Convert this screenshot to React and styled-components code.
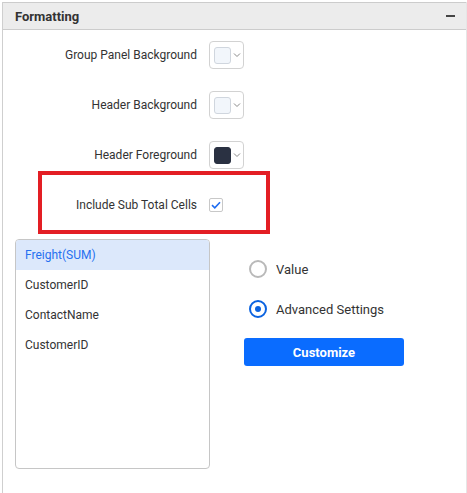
import React, { useState } from 'react'
import styled, { createGlobalStyle } from 'styled-components'

const GlobalStyle = createGlobalStyle`
  body {
    margin: 0;
    background: #fff;
    font-family: Roboto, "Liberation Sans", Arial, sans-serif;
    color: #333;
  }
`

const Panel = styled.div`
  box-sizing: border-box;
  margin: 2px 0 0 2px;
  width: 465px;
  height: 491px;
  border-left: 1px solid #cfcfcf;
  border-right: 1px solid #e6e6e6;
`

const Header = styled.div`
  display: flex;
  align-items: center;
  justify-content: space-between;
  height: 26px;
  padding: 0 11px 0 12px;
  background: #ececec;
  border-top: 1px solid #cccccc;
  border-bottom: 1px solid #cccccc;
  font-size: 13px;
  font-weight: 700;
  color: #333;
`

const Collapse = styled.span`
  display: block;
  width: 9px;
  height: 2px;
  background: #444;
`

const Form = styled.div`
  display: flex;
  flex-direction: column;
`

const Row = styled.div`
  position: relative;
  display: grid;
  grid-template-columns: 194px auto;
  column-gap: 12px;
  align-items: center;
  height: 50px;
`

const Label = styled.span`
  text-align: right;
  font-size: 12px;
  color: #333;
`

const Highlight = styled.div`
  position: absolute;
  left: 35px;
  top: -9px;
  width: 224px;
  height: 55px;
  border: 4px solid #e31e24;
`

const Picker = styled.div`
  box-sizing: border-box;
  display: flex;
  align-items: center;
  gap: 2px;
  width: 35px;
  height: 28px;
  padding-left: 4px;
  border: 1px solid #d2d2d2;
  border-radius: 4px;
  background: #fff;
`

const Swatch = styled.span`
  box-sizing: border-box;
  width: 17px;
  height: 17px;
  border-radius: 3px;
  border: 1px solid ${p => (p.dark ? '#2a3142' : '#d0d6de')};
  background: ${p => p.color};
`

const Check = styled.span`
  box-sizing: border-box;
  display: flex;
  align-items: center;
  justify-content: center;
  width: 14px;
  height: 14px;
  border: 1px solid #c8c8c8;
  border-radius: 2px;
  background: #fff;
`

const Lower = styled.div`
  display: flex;
  gap: 39px;
  padding: 9px 0 0 12px;
`

const List = styled.div`
  box-sizing: border-box;
  width: 195px;
  height: 230px;
  border: 1px solid #c6c6c6;
  border-radius: 4px;
  overflow: hidden;
`

const Item = styled.div`
  height: 30px;
  line-height: 31px;
  padding-left: 9px;
  font-size: 12px;
  color: ${p => (p.selected ? '#2570f0' : '#333')};
  background: ${p => (p.selected ? '#dce8fb' : 'transparent')};
  cursor: pointer;
`

const Options = styled.div`
  display: flex;
  flex-direction: column;
  padding-top: 20px;
`

const RadioRow = styled.label`
  display: flex;
  align-items: center;
  gap: 9px;
  height: 20px;
  margin-bottom: 20px;
  font-size: 13px;
  color: #333;
  cursor: pointer;
`

const Radio = styled.span`
  box-sizing: border-box;
  display: flex;
  align-items: center;
  justify-content: center;
  width: 18px;
  height: 18px;
  border-radius: 50%;
  border: 2px solid ${p => (p.checked ? '#0b63e0' : '#b9b9b9')};
  &::after {
    content: '';
    display: ${p => (p.checked ? 'block' : 'none')};
    width: 6px;
    height: 6px;
    border-radius: 50%;
    background: #0b63e0;
  }
`

const Button = styled.button`
  box-sizing: border-box;
  width: 160px;
  height: 28px;
  margin: -1px 0 0 -5px;
  border: none;
  border-radius: 3px;
  background: #0a6cff;
  color: #fff;
  font-family: inherit;
  font-size: 13px;
  font-weight: 700;
  cursor: pointer;
`

const Chevron = () => (
  <svg width="8" height="6" viewBox="0 0 8 6">
    <path d="M1 1.5 L4 4.5 L7 1.5" fill="none" stroke="#8a8a8a" strokeWidth="1" />
  </svg>
)

const ColorPicker = ({ color, dark }) => (
  <Picker>
    <Swatch color={color} dark={dark} />
    <Chevron />
  </Picker>
)

const fields = ['Freight(SUM)', 'CustomerID', 'ContactName', 'CustomerID']

export default function App() {
  const [selected, setSelected] = useState(0)
  const [mode, setMode] = useState('advanced')

  return (
    <>
      <GlobalStyle />
      <Panel>
        <Header>
          Formatting
          <Collapse />
        </Header>
        <Form>
          <Row>
            <Label>Group Panel Background</Label>
            <ColorPicker color="#f2f6fb" />
          </Row>
          <Row>
            <Label>Header Background</Label>
            <ColorPicker color="#f2f6fb" />
          </Row>
          <Row>
            <Label>Header Foreground</Label>
            <ColorPicker color="#2a3142" dark />
          </Row>
          <Row>
            <Highlight />
            <Label>Include Sub Total Cells</Label>
            <Check>
              <svg width="10" height="8" viewBox="0 0 10 8">
                <path d="M1 4.2 L3.8 6.8 L9 1.2" fill="none" stroke="#1e6cf0" strokeWidth="1.6" />
              </svg>
            </Check>
          </Row>
        </Form>
        <Lower>
          <List>
            {fields.map((f, i) => (
              <Item key={i} selected={i === selected} onClick={() => setSelected(i)}>
                {f}
              </Item>
            ))}
          </List>
          <Options>
            <RadioRow onClick={() => setMode('value')}>
              <Radio checked={mode === 'value'} />
              Value
            </RadioRow>
            <RadioRow onClick={() => setMode('advanced')}>
              <Radio checked={mode === 'advanced'} />
              Advanced Settings
            </RadioRow>
            <Button>Customize</Button>
          </Options>
        </Lower>
      </Panel>
    </>
  )
}
